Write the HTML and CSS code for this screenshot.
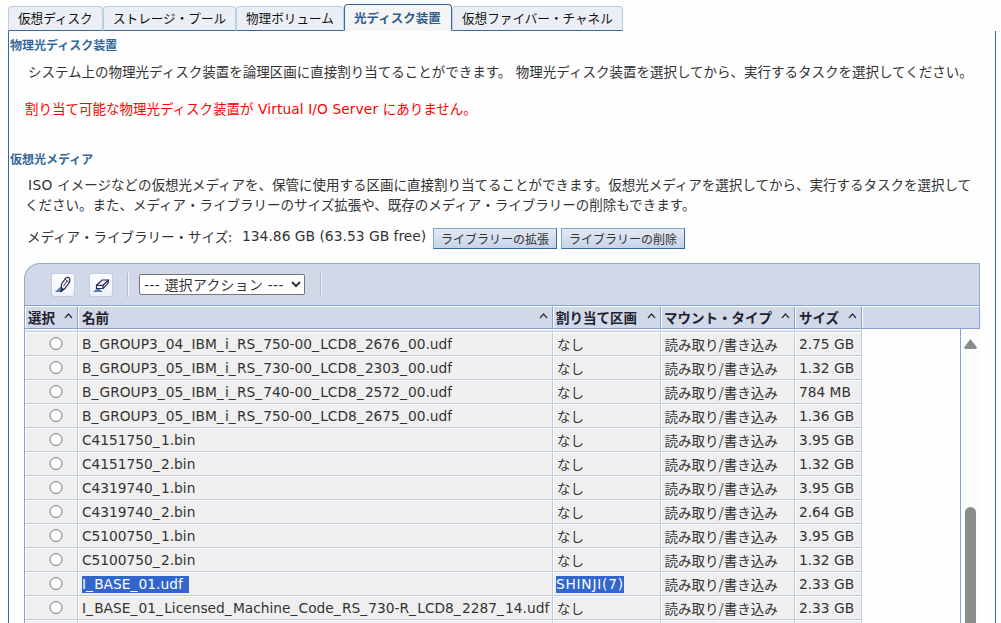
FILE: index.html
```html
<!DOCTYPE html>
<html lang="ja">
<head>
  <meta charset="UTF-8">
  <title>仮想ストレージ管理</title>
  <link rel="stylesheet" href="styles.css">
</head>
<body>
  <div class="tabs">
    <div class="tab disk">仮想ディスク</div>
    <div class="tab pool">ストレージ・プール</div>
    <div class="tab volume">物理ボリューム</div>
    <div class="tab optical active">光ディスク装置</div>
    <div class="tab fibre">仮想ファイバー・チャネル</div>
  </div>

  <div class="panel">
    <h2>物理光ディスク装置</h2>
    <p class="intro">システム上の物理光ディスク装置を論理区画に直接割り当てることができます。 物理光ディスク装置を選択してから、実行するタスクを選択してください。</p>
    <p class="error">割り当て可能な物理光ディスク装置が <span class="latin">Virtual I/O Server</span> にありません。</p>

    <h2 class="media-title">仮想光メディア</h2>
    <p class="media-text"><span class="latin">ISO</span> イメージなどの仮想光メディアを、保管に使用する区画に直接割り当てることができます。仮想光メディアを選択してから、実行するタスクを選択して<br>ください。また、メディア・ライブラリーのサイズ拡張や、既存のメディア・ライブラリーの削除もできます。</p>

    <div class="library">
      <span class="library-label">メディア・ライブラリー・サイズ:</span>
      <span class="library-size">134.86 GB (63.53 GB free)</span>
      <button class="btn">ライブラリーの拡張</button>
      <button class="btn">ライブラリーの削除</button>
    </div>

    <div class="media">
      <div class="toolbar">
        <button class="tool" title="編集">
          <svg width="18" height="18" viewBox="0 0 18 18">
            <path d="M1 16 6.500 10.500 7 16Z" fill="#557fae"/>
            <path d="M7.500 8 12 1.700Q14 .8 15.800 2.700L15.600 6 10.800 12.500 7.300 15.500Z" fill="#f7f8fc" stroke="#292957" stroke-width="1.200"/>
            <path d="M7.500 11.500 9.500 13 7.200 15.600ZM11.500 3.500 14.800 6.200M9.500 10 13.200 5" fill="#292957" stroke="#292957"/>
          </svg>
        </button>
        <button class="tool" title="消去">
          <svg width="18" height="18" viewBox="0 0 18 18">
            <path d="M1 16 6 11.500 10.700 16Z" fill="#557fae"/>
            <path d="M4.500 9.300 10 4H16.500L16 7.300 11 12.500H4.500Z" fill="#f7f8fc" stroke="#292957" stroke-width="1.200"/>
            <path d="M4.500 9.300H11L16.500 4M11 9.300V12.500" fill="none" stroke="#292957" stroke-width="1.200"/>
          </svg>
        </button>
        <span class="separator first"></span>
        <select class="action">
          <option>--- 選択アクション ---</option>
        </select>
        <span class="separator last"></span>
      </div>

      <div class="columns">
        <div class="column pick">選択 <svg class="sort" viewBox="0 0 9 6"><path d="M1 5 4.500 1 8 5"/></svg></div>
        <div class="column name">名前 <svg class="sort" viewBox="0 0 9 6"><path d="M1 5 4.500 1 8 5"/></svg></div>
        <div class="column lpar">割り当て区画 <svg class="sort" viewBox="0 0 9 6"><path d="M1 5 4.500 1 8 5"/></svg></div>
        <div class="column mount">マウント・タイプ <svg class="sort" viewBox="0 0 9 6"><path d="M1 5 4.500 1 8 5"/></svg></div>
        <div class="column size">サイズ <svg class="sort" viewBox="0 0 9 6"><path d="M1 5 4.500 1 8 5"/></svg></div>
        <div class="column rest"></div>
      </div>

      <div class="scroll-area">
        <div class="rows" id="rows">
          <div class="row cut"><div></div><div></div><div></div><div></div><div></div></div>
        </div>
        <div class="scrollbar">
          <div class="arrow-up"></div>
          <div class="thumb"></div>
        </div>
      </div>
    </div>
  </div>

  <script>
    const media = [
      ['B_GROUP3_04_IBM_i_RS_750-00_LCD8_2676_00.udf', 'なし', '2.75 GB'],
      ['B_GROUP3_05_IBM_i_RS_730-00_LCD8_2303_00.udf', 'なし', '1.32 GB'],
      ['B_GROUP3_05_IBM_i_RS_740-00_LCD8_2572_00.udf', 'なし', '784 MB'],
      ['B_GROUP3_05_IBM_i_RS_750-00_LCD8_2675_00.udf', 'なし', '1.36 GB'],
      ['C4151750_1.bin', 'なし', '3.95 GB'],
      ['C4151750_2.bin', 'なし', '1.32 GB'],
      ['C4319740_1.bin', 'なし', '3.95 GB'],
      ['C4319740_2.bin', 'なし', '2.64 GB'],
      ['C5100750_1.bin', 'なし', '3.95 GB'],
      ['C5100750_2.bin', 'なし', '1.32 GB'],
      ['I_BASE_01.udf', 'SHINJI(7)', '2.33 GB'],
      ['I_BASE_01_Licensed_Machine_Code_RS_730-R_LCD8_2287_14.udf', 'なし', '2.33 GB'],
      ['', '', '']
    ];
    const rows = document.getElementById('rows');

    media.forEach(([name, lpar, size]) => {
      const row = document.createElement('div');
      const marked = lpar === 'SHINJI(7)';
      row.className = marked ? 'row marked' : 'row';
      row.innerHTML = `
        <div class="pick">${name ? '<input type="radio" name="media">' : ''}</div>
        <div class="name"><span>${name.replace(/_/g, '<i>_</i>')}</span></div>
        <div class="lpar"><span>${lpar}</span></div>
        <div class="mount">${name ? '読み取り/書き込み' : ''}</div>
        <div class="size">${size}</div>`;
      rows.appendChild(row);
    });
  </script>
</body>
</html>
```
FILE: styles.css
```css
* {
  box-sizing: border-box;
}

body {
  margin: 0;
  padding: 4px 5px 0 8px;
  height: 623px;
  overflow: hidden;
  background: #fefefe;
  color: #333;
  font-family: "Noto Sans CJK JP", sans-serif;
  font-size: 13.5px;
}

h2, p {
  margin: 0;
  white-space: nowrap;
}

p {
  word-spacing: 1.5px;
}

.tabs {
  display: flex;
  align-items: flex-end;
  height: 27px;
}

.tab {
  height: 25px;
  padding-left: 9px;
  border: 1px solid #b6cfe5;
  border-bottom-color: #33699c;
  border-radius: 4px 4px 0 0;
  background: #ebeef5;
  color: #111;
  font-size: 12.6px;
  line-height: 21px;
  white-space: nowrap;
}

.tab.disk { width: 95px; }
.tab.pool { width: 133px; }
.tab.volume { width: 108px; }
.tab.optical { width: 108px; }
.tab.fibre { width: 171px; }

.tab.active {
  height: 27px;
  border-color: #33699c;
  border-bottom-color: #f5f5f5;
  background: #f5f5f5;
  color: #2f5d8d;
  font-weight: bold;
  font-size: 12.5px;
  line-height: 25px;
}

.panel {
  height: 593px;
  border-left: 1px solid #33699c;
  border-right: 1px solid #33699c;
  padding-top: 4px;
}

h2 {
  height: 20px;
  padding-left: 1px;
  color: #336699;
  font-size: 12px;
  line-height: 20px;
}

.intro {
  height: 26px;
  padding: 6px 0 0 19px;
  line-height: 20px;
}

.error {
  height: 37px;
  padding: 17px 0 0 16px;
  color: #f00;
  line-height: 20px;
}

.latin, .library-size, .name, .size {
  font-family: "DejaVu Sans", "Noto Sans CJK JP", sans-serif;
  font-size: 13.75px;
}

.latin {
  letter-spacing: 0.1px;
  word-spacing: 0;
  line-height: 1;
}

.media-title {
  margin-top: 31px;
}

.media-text {
  height: 46px;
  padding: 5px 0 0 16px;
  line-height: 20px;
}

.media-text .latin {
  margin-left: 3px;
  letter-spacing: 0.4px;
}

.library {
  display: flex;
  height: 22px;
  margin: 13px 0 0 18px;
  line-height: 17px;
}

.library-label {
  width: 215px;
}

.library-size {
  width: 191px;
  font-size: 13.85px;
}

.btn {
  width: 124px;
  height: 21px;
  margin: 0 4px 0 0;
  padding: 0;
  border: 1px solid;
  border-color: #83a5cb #33699c #33699c #83a5cb;
  background: linear-gradient(#e3e9f4, #c8d3e8);
  color: #333;
  font-family: inherit;
  font-size: 12px;
  line-height: 19px;
}

.media {
  width: 956px;
  margin: 13px 0 0 15px;
}

.toolbar {
  display: flex;
  align-items: center;
  height: 42px;
  border: 1px solid #8faace;
  border-bottom: 0;
  border-radius: 16px 0 0 0;
  background: #d1d8e8;
  padding-left: 26px;
}

.tool {
  width: 24px;
  height: 24px;
  margin-right: 14px;
  padding: 2px;
  border: 1px solid #bdcde3;
  border-radius: 3px;
  background: linear-gradient(#fff, #edf0f7);
}

.tool svg {
  display: block;
}

.separator {
  width: 2px;
  height: 24px;
  border-left: 1px solid #a9bcdb;
  border-right: 1px solid #f2f4f9;
}

.separator.first { margin-right: 10px; }
.separator.last { margin-left: 15px; }

.action {
  width: 166px;
  height: 21px;
  padding: 0;
  border: 1px solid #767676;
  border-radius: 2px;
  background-color: #fff;
  color: #333;
  font-family: "DejaVu Sans", "Noto Sans CJK JP", sans-serif;
  font-size: 13.8px;
  letter-spacing: 0.35px;
}

.columns, .row {
  display: grid;
  grid-template-columns: 53px 475px 108px 134px 67px;
}

.columns {
  grid-template-columns: 53px 475px 108px 134px 67px 118px;
  height: 24px;
  border-left: 1px solid #82a2d8;
  border-top: 1px solid #82a2d8;
  border-bottom: 1px solid #82a2d8;
  background: #d1d8e8;
}

.column {
  display: flex;
  justify-content: space-between;
  align-items: center;
  border-top: 1px solid #fff;
  border-left: 1px solid #fff;
  border-right: 1px solid #82a2d8;
  padding: 0 4px 1px 3px;
  color: #22222f;
  font-family: "Noto Sans CJK JP", sans-serif;
  font-size: 13.5px;
  font-weight: bold;
  line-height: 20px;
  white-space: nowrap;
}

.column.pick, .column.lpar, .column.mount { padding-left: 2px; }

.sort {
  width: 9px;
  height: 6px;
  margin-bottom: 2px;
  fill: none;
  stroke: #333;
  stroke-width: 1.3;
}

.scroll-area {
  display: flex;
  justify-content: space-between;
  height: 294px;
  overflow: hidden;
}

.rows {
  border-left: 1px solid #82a2d8;
}

.row {
  height: 24px;
}

.row.cut {
  height: 3px;
}

.row > div {
  border-top: 1px solid #fff;
  border-left: 1px solid #fff;
  border-right: 1px solid #bccae2;
  border-bottom: 1px solid #bccae2;
  padding-left: 3px;
  background: #efefef;
  line-height: 22px;
  white-space: nowrap;
}

.row > .mount {
  padding-left: 2.5px;
}

.row > .pick {
  padding: 4px 0 0 23px;
}

.row input {
  display: block;
  width: 14px;
  height: 13px;
  margin: 0;
}

/* wider underscores in the file names */
.name i {
  font-style: normal;
  letter-spacing: 1.25px;
}

.marked .name span, .marked .lpar span {
  display: inline-block;
  height: 17px;
  margin-top: 2px;
  background: #3266cc;
  color: #fff;
  line-height: 17px;
}

.marked .name span {
  padding-right: 6px;
}

.row.marked > .lpar {
  padding-left: 2px;
  font-family: "DejaVu Sans", sans-serif;
  font-size: 13.75px;
}

.marked .lpar span {
  letter-spacing: 0.75px;
}

.scrollbar {
  width: 20px;
  border-left: 1px solid #82a2d8;
  background: #fcfcfc;
}

.arrow-up {
  width: 13px;
  height: 10px;
  margin: 10px 0 0 3px;
  background: #8b8b8b;
  clip-path: polygon(50% 0, 100% 85%, 92% 100%, 8% 100%, 0 85%);
}

.thumb {
  width: 11px;
  height: 130px;
  margin: 158px 0 0 4px;
  border-radius: 6px;
  background: #8b8b8b;
}
```
